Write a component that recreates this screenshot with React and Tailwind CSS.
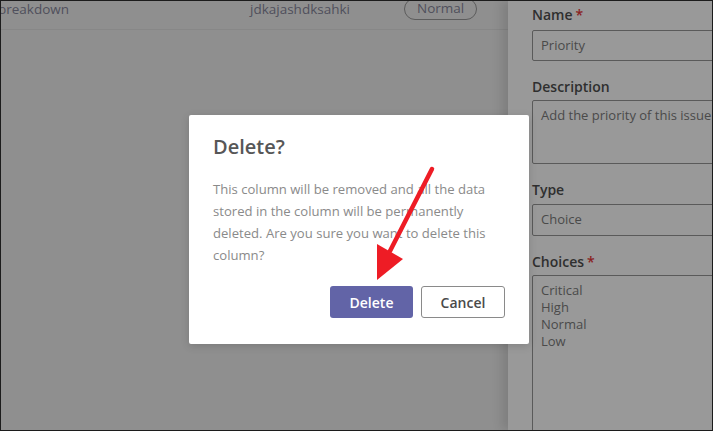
import React from 'react';

const font = { fontFamily: '"Open Sans", "Noto Sans", sans-serif' };

function Field({ label, required, children }) {
  return (
    <div className="flex flex-col">
      <div className="text-[14px] font-semibold text-[#2f2f2f] leading-[18px]">
        {label}
        {required && <span className="text-[#8a1f1f] ml-[3px]">*</span>}
      </div>
      {children}
    </div>
  );
}

function DeleteArrow() {
  return (
    <svg className="absolute left-0 top-0 pointer-events-none" width="713" height="431">
      <line x1="431" y1="168" x2="389" y2="250" stroke="#ee1c25" strokeWidth="4.5" strokeLinecap="round" />
      <polygon points="376,243 402,258 376,279" fill="#ee1c25" />
    </svg>
  );
}

export default function App() {
  return (
    <div className="relative w-[713px] h-[431px] overflow-hidden border border-[#1c1c1c] bg-[#8f8f8f]" style={font}>
      <div className="flex h-full">
        {/* dimmed list behind */}
        <div className="flex-1 flex flex-col">
          <div className="h-[30px] -mt-[1px] flex items-start border-b border-[#878787] text-[13.5px] text-[#4f4f5c]">
            <span className="-ml-[3px] w-[252px] leading-[18px]">breakdown</span>
            <span className="w-[154px] leading-[18px]">jdkajashdksahki</span>
            <span className="-mt-[2px] h-[22px] px-[12px] rounded-full border border-[#5c5c5c] leading-[19px]">Normal</span>
          </div>
        </div>

        {/* dimmed side panel */}
        <div className="w-[204px] h-full bg-[#999999] shadow-[-6px_0_10px_rgba(0,0,0,0.12)] pl-[24px] pt-[5px] flex flex-col gap-[17px] text-[13px] text-[#4a4a4a]">
          <Field label="Name" required>
            <div className="mt-[6px] h-[31px] -mr-[20px] border border-[#5a5a5a] rounded-[2px] pl-[8px] flex items-center">Priority</div>
          </Field>
          <Field label="Description">
            <div className="mt-[4px] h-[64px] -mr-[20px] border border-[#5a5a5a] rounded-[2px] pl-[8px] pt-[5px] whitespace-nowrap overflow-hidden">Add the priority of this issue</div>
          </Field>
          <Field label="Type">
            <div className="mt-[5px] h-[32px] -mr-[20px] border border-[#5a5a5a] rounded-[2px] pl-[8px] flex items-center">Choice</div>
          </Field>
          <Field label="Choices" required>
            <div className="mt-[4px] h-[170px] -mr-[20px] border border-[#5a5a5a] rounded-[2px] pl-[8px] pt-[6px] leading-[17px]">
              <div>Critical</div>
              <div>High</div>
              <div>Normal</div>
              <div>Low</div>
            </div>
          </Field>
        </div>
      </div>

      {/* modal */}
      <div className="absolute left-[188px] top-[114px] w-[340px] h-[229px] bg-white shadow-[0_2px_8px_rgba(0,0,0,0.15)] rounded-[2px] px-[24px] pt-[18px]">
        <div className="text-[20px] font-semibold text-[#575757] leading-[28px]">Delete?</div>
        <p className="mt-[17px] text-[13.1px] leading-[22px] text-[#8a8a8a] pr-[6px]">
          This column will be removed and all the data stored in the column will be permanently deleted. Are you sure you want to delete this column?
        </p>
        <div className="mt-[20px] flex justify-end gap-[8px]">
          <button className="w-[83px] h-[32px] rounded-[3px] bg-[#6264a7] text-white text-[14px] font-semibold">Delete</button>
          <button className="w-[84px] h-[32px] rounded-[3px] bg-white border border-[#8a8a8a] text-[#4a4a4a] text-[14px] font-semibold">Cancel</button>
        </div>
      </div>

      <DeleteArrow />
    </div>
  );
}
